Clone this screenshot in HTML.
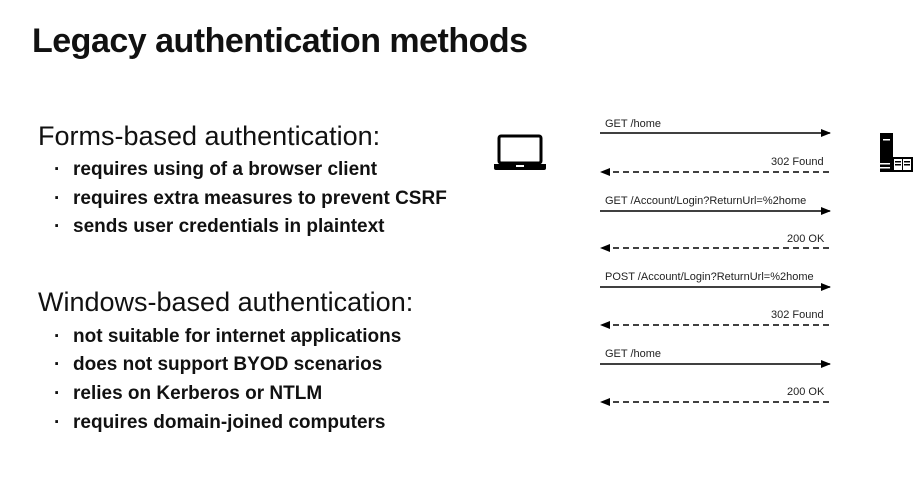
<!DOCTYPE html>
<html><head><style>
body{margin:0;width:922px;height:502px;background:#fff;position:relative;overflow:hidden;font-family:"Liberation Sans",sans-serif;color:#111}
.a{position:absolute;white-space:nowrap}
h1{position:absolute;left:32px;top:22px;margin:0;font-size:34px;font-weight:bold;letter-spacing:-0.5px}
.h{font-size:27px;font-weight:normal}
.b{font-size:19px;font-weight:bold}
.d{font-size:19px;left:54px;font-weight:bold}
.l{font-size:11px;color:#222}
</style></head><body>
<h1>Legacy authentication methods</h1>
<div class="a h" style="left:38px;top:121px">Forms-based authentication:</div>
<div class="a d" style="top:159px">·</div><div class="a b" style="left:73px;top:159px">requires using of a browser client</div>
<div class="a d" style="top:188px">·</div><div class="a b" style="left:73px;top:188px">requires extra measures to prevent CSRF</div>
<div class="a d" style="top:216px">·</div><div class="a b" style="left:73px;top:216px">sends user credentials in plaintext</div>
<div class="a h" style="left:38px;top:287px">Windows-based authentication:</div>
<div class="a d" style="top:326px">·</div><div class="a b" style="left:73px;top:326px">not suitable for internet applications</div>
<div class="a d" style="top:354px">·</div><div class="a b" style="left:73px;top:354px">does not support BYOD scenarios</div>
<div class="a d" style="top:383px">·</div><div class="a b" style="left:73px;top:383px">relies on Kerberos or NTLM</div>
<div class="a d" style="top:412px">·</div><div class="a b" style="left:73px;top:412px">requires domain-joined computers</div>

<svg class="a" style="left:0;top:0" width="922" height="502">
<defs>
<marker id="m" markerUnits="userSpaceOnUse" markerWidth="10" markerHeight="8" refX="9" refY="4" orient="auto"><path d="M0 0L10 4L0 8z" fill="#000"/></marker>
</defs>
<g stroke="#000" stroke-width="1.6" fill="none">
<line x1="600" y1="133" x2="830" y2="133" marker-end="url(#m)"/>
<line x1="600" y1="211" x2="830" y2="211" marker-end="url(#m)"/>
<line x1="600" y1="287" x2="830" y2="287" marker-end="url(#m)"/>
<line x1="600" y1="364" x2="830" y2="364" marker-end="url(#m)"/>
<g stroke-dasharray="6,4">
<line x1="829" y1="172" x2="601" y2="172" marker-end="url(#m)"/>
<line x1="829" y1="248" x2="601" y2="248" marker-end="url(#m)"/>
<line x1="829" y1="325" x2="601" y2="325" marker-end="url(#m)"/>
<line x1="829" y1="402" x2="601" y2="402" marker-end="url(#m)"/>
</g>
<rect x="499" y="136" width="42" height="27" rx="2" stroke-width="3"/>
</g>
<path d="M494 164h52v4q0 2-2 2h-48q-2 0-2-2z" fill="#000"/>
<rect x="516" y="165" width="8" height="2" fill="#fff"/>
<rect x="880" y="133" width="13" height="39" fill="#000"/>
<rect x="883" y="139" width="7" height="1.5" fill="#fff"/>
<rect x="880" y="163" width="10" height="1.5" fill="#fff"/>
<rect x="880" y="167" width="10" height="1.5" fill="#fff"/>
<rect x="892" y="157" width="21" height="15" fill="#000"/>
<rect x="894" y="159" width="8" height="11" fill="#fff"/><rect x="903" y="159" width="8" height="11" fill="#fff"/>
<g fill="#000"><rect x="895" y="161" width="6" height="1.5"/><rect x="895" y="164" width="6" height="1.5"/><rect x="904" y="161" width="6" height="1.5"/><rect x="904" y="164" width="6" height="1.5"/></g>
</svg>
<div class="a l" style="left:605px;top:118px">GET /home</div>
<div class="a l" style="left:771px;top:156px">302 Found</div>
<div class="a l" style="left:605px;top:195px">GET /Account/Login?ReturnUrl=%2home</div>
<div class="a l" style="left:787px;top:233px">200 OK</div>
<div class="a l" style="left:605px;top:271px">POST /Account/Login?ReturnUrl=%2home</div>
<div class="a l" style="left:771px;top:309px">302 Found</div>
<div class="a l" style="left:605px;top:348px">GET /home</div>
<div class="a l" style="left:787px;top:386px">200 OK</div>
</body></html>
